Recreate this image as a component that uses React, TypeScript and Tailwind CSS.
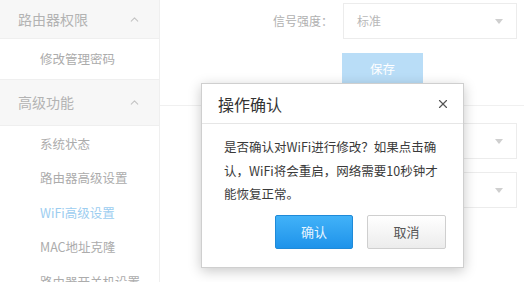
import React from "react";
import { ChevronUp, X } from "lucide-react";

const font = {
  fontFamily: '"Noto Sans CJK SC", "Noto Sans", sans-serif',
};

const Caret: React.FC = () => (
  <svg width="8" height="5" viewBox="0 0 8 5" className="shrink-0">
    <polygon points="0,0 8,0 4,5" fill="#cfcfcf" />
  </svg>
);

const SelectBox: React.FC<{ value?: string }> = ({ value }) => (
  <div className="w-[174px] h-[36px] border border-[#ececec] bg-white flex items-center justify-between pl-[13px] pr-[13px]">
    <span className="text-[12px] text-[#b8b8b8]">{value}</span>
    <Caret />
  </div>
);

const GroupHeader: React.FC<{ title: string; h: string }> = ({ title, h }) => (
  <div
    className={`${h} shrink-0 flex items-center justify-between pl-[18px] pr-[18px] bg-[#f7f7f7] border-b border-[#efefef]`}
  >
    <span className="text-[14px] text-[#b3b3b3]">{title}</span>
    <ChevronUp size={13} strokeWidth={2} color="#c4c4c4" />
  </div>
);

const App: React.FC = () => {
  const subItems = [
    { name: "系统状态" },
    { name: "路由器高级设置" },
    { name: "WiFi高级设置", active: true },
    { name: "MAC地址克隆" },
    { name: "路由器开关机设置" },
  ];

  return (
    <div
      className="relative w-[524px] h-[282px] overflow-hidden bg-white flex"
      style={font}
    >
      {/* Sidebar */}
      <div className="w-[160px] shrink-0 border-r border-[#efefef] bg-white flex flex-col">
        <GroupHeader title="路由器权限" h="h-[39px]" />
        <div className="h-[41px] shrink-0 flex items-center pl-[40px] border-b border-[#efefef]">
          <span className="text-[12.5px] text-[#acacac]">修改管理密码</span>
        </div>
        <GroupHeader title="高级功能" h="h-[46px]" />
        <div className="flex flex-col shrink-0 pt-[1px]">
          {subItems.map((item) => (
            <div key={item.name} className="h-[34.5px] shrink-0 flex items-center pl-[40px]">
              <span
                className={`text-[12.5px] whitespace-nowrap ${
                  item.active ? "text-[#9ccdf0]" : "text-[#acacac]"
                }`}
              >
                {item.name}
              </span>
            </div>
          ))}
        </div>
      </div>

      {/* Main */}
      <div className="flex-1 flex flex-col pt-[3px]">
        <div className="flex items-center">
          <div className="w-[173px] text-right text-[12px] text-[#b0b0b0]">信号强度：</div>
          <div className="ml-[10px]">
            <SelectBox value="标准" />
          </div>
        </div>
        <div className="flex mt-[14px] pl-[182px]">
          <button className="w-[81px] h-[32px] bg-[#b9ddf7] text-white text-[12.5px]">保存</button>
        </div>
        <div className="mt-[20px] border-t border-[#f0f0f0]" />
        <div className="flex flex-col gap-[13px] mt-[17px] pl-[183px]">
          <SelectBox />
          <SelectBox />
        </div>
      </div>

      {/* Dialog */}
      <div className="absolute left-[201px] top-[83px] w-[263px] h-[185px] bg-white border border-[#cfcfcf] shadow-[0_3px_12px_rgba(0,0,0,0.22)] flex flex-col">
        <div className="h-[40px] shrink-0 flex items-center justify-between pl-[16px] pr-[13px] border-b border-[#e6e6e6]">
          <span className="text-[16px] text-[#333]">操作确认</span>
          <X size={14} strokeWidth={2} color="#555" />
        </div>
        <div className="pt-[11px] pl-[22px] pr-[24px] text-[12.5px] leading-[23.5px] text-[#3a3a3a]">
          是否确认对WiFi进行修改？如果点击确认，WiFi将会重启，网络需要10秒钟才能恢复正常。
        </div>
        <div className="flex justify-end gap-[14px] pr-[17px] mt-[9px]">
          <button className="w-[78px] h-[34px] rounded-[2px] border border-[#1f8ad8] bg-gradient-to-b from-[#41b2f8] to-[#1d93ea] text-[13px] text-[#e6f4ff]">
            确认
          </button>
          <button className="w-[79px] h-[34px] rounded-[2px] border border-[#cfcfcf] bg-gradient-to-b from-white to-[#ececec] text-[13px] text-[#555]">
            取消
          </button>
        </div>
      </div>
    </div>
  );
};

export default App;
